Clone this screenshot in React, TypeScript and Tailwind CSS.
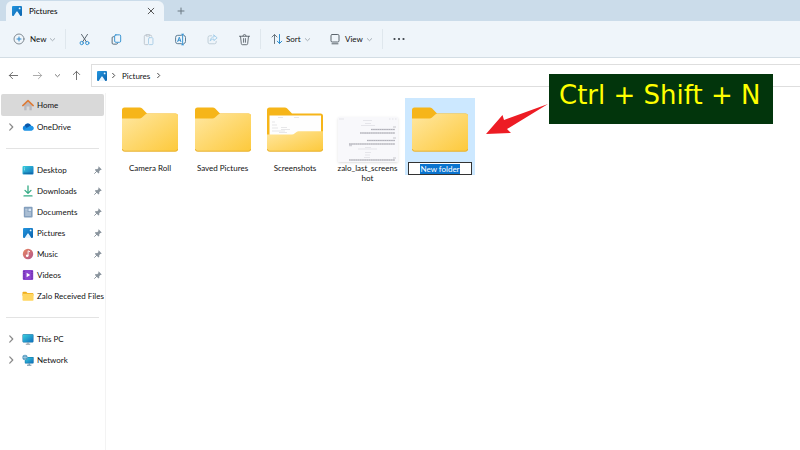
import { useEffect, useRef, useState } from 'react';
import type { ReactNode } from 'react';
import clsx from 'clsx';

const Chevron = ({ dir = 'down', className }: { dir?: 'down' | 'right'; className?: string }) => (
  <svg viewBox="0 0 8 8" className={clsx('shrink-0', className)} fill="none" stroke="currentColor" strokeLinecap="round" strokeLinejoin="round">
    <path d={dir === 'down' ? 'M1.5 3 4 5.4 6.5 3' : 'M3 1.5 5.4 4 3 6.5'} />
  </svg>
);

const PicturesIcon = ({ className = 'size-3' }: { className?: string }) => (
  <svg viewBox="0 0 12 12" className={clsx('shrink-0', className)}>
    <defs>
      <linearGradient id="pic" x1="0" y1="0" x2="1" y2="1">
        <stop offset="0" stopColor="#2496e0" />
        <stop offset="1" stopColor="#0a63ad" />
      </linearGradient>
    </defs>
    <rect x="1" y="1" width="10" height="10" rx="1" fill="url(#pic)" />
    <path d="M2.6 11 5.4 6.8a.7.7 0 0 1 1.200 0L9.400 11z" fill="#e9f6ff" />
    <circle cx="8.600" cy="3.400" r=".9" fill="#e9f6ff" />
  </svg>
);

const Icon = ({ children }: { children: ReactNode }) => (
  <svg viewBox="0 0 12 12" className="size-3 shrink-0">{children}</svg>
);

const HomeIcon = () => (
  <Icon>
    <path d="M2.2 6v5.2h2.4V7.6h2.8v3.6h2.4V6L6 2.6z" fill="#b9b9bf" />
    <path d="M.8 6.600 6 1.600l5.200 5" fill="none" stroke="#dd7a35" strokeWidth="1.500" strokeLinecap="round" strokeLinejoin="round" />
  </Icon>
);

const OneDriveIcon = () => (
  <Icon>
    <path d="M3 9.6a2.6 2.6 0 0 1-.3-5.1A3.4 3.4 0 0 1 9 4.8a2.5 2.5 0 0 1 .5 4.8z" fill="#1585dc" />
    <path d="M2.7 4.5A3.4 3.4 0 0 1 9 4.8L5 7.2z" fill="#0c57a8" />
    <path d="M1.4 8.9 7 5.6a3 3 0 0 1 4.6.7 2.5 2.5 0 0 1-2.1 3.3H3a2.5 2.5 0 0 1-1.6-.7z" fill="#1f96e8" />
  </Icon>
);

const DesktopIcon = () => (
  <Icon>
    <defs>
      <linearGradient id="desk" x1="0" y1="0" x2="1" y2="1">
        <stop offset="0" stopColor="#3bd0dd" />
        <stop offset="1" stopColor="#0f6fbd" />
      </linearGradient>
    </defs>
    <rect x=".5" y="2" width="11" height="8.5" rx="1" fill="url(#desk)" />
    <path d="M1.5 9.2h9" stroke="#0c5a94" strokeWidth=".8" />
    <path d="M2 4h1M2 5.8h1" stroke="#d9fbff" strokeWidth=".7" />
  </Icon>
);

const DownloadsIcon = () => (
  <Icon>
    <path d="M6 1v7M3 5.4 6 8.4l3-3M2 10.9h8" fill="none" stroke="#35ab85" strokeWidth="1.3" strokeLinecap="round" strokeLinejoin="round" />
  </Icon>
);

const DocumentsIcon = () => (
  <Icon>
    <rect x="1.8" y=".8" width="8.8" height="10.6" rx="1" fill="#849fbd" />
    <path d="M3.2 3.2h2.4M3.2 5h2.4M3.2 7h5.8M3.2 9h5.8" stroke="#e4edf6" strokeWidth=".8" />
    <rect x="6.5" y="2.6" width="2.6" height="2.6" fill="#d7e6f5" />
  </Icon>
);

const MusicIcon = () => (
  <Icon>
    <defs>
      <linearGradient id="mus" x1="0" y1="0" x2="1" y2="1">
        <stop offset="0" stopColor="#e8875f" />
        <stop offset="1" stopColor="#b4568c" />
      </linearGradient>
    </defs>
    <circle cx="6" cy="6" r="5.2" fill="url(#mus)" />
    <circle cx="5.2" cy="7.8" r="1.3" fill="#fff" />
    <path d="M6.1 7.8V2.8l1.9 1" fill="none" stroke="#fff" strokeWidth=".9" />
  </Icon>
);

const VideosIcon = () => (
  <Icon>
    <rect x=".8" y="1" width="10.4" height="10" rx="1" fill="#8c45cf" />
    <path d="M2 2v8.5M10 2v8.5" stroke="#5b2397" strokeWidth="1" strokeDasharray="1.2 1" />
    <path d="M4.6 3.8v4.4L8.2 6z" fill="#fff" />
  </Icon>
);

const SmallFolderIcon = () => (
  <Icon>
    <path d="M.5 2.6c0-.5.4-.9.9-.9h2.8l1.2 1.2h5c.6 0 1 .4 1 .9v2H.5z" fill="#efae1c" />
    <rect x=".5" y="3.8" width="11" height="6.9" rx=".8" fill="#ffd661" />
  </Icon>
);

const ThisPcIcon = () => (
  <Icon>
    <rect x=".5" y="1.2" width="11" height="8.2" rx=".8" fill="#0d6fa5" />
    <rect x="1" y="1.7" width="10" height="7.2" rx=".4" fill="url(#desk)" />
    <path d="M6 9.4v1.6M3.8 11.2h4.4" stroke="#7a8c99" strokeWidth=".9" />
  </Icon>
);

const NetworkIcon = () => (
  <Icon>
    <rect x="2.8" y="3" width="8.8" height="6.4" rx=".6" fill="#0d6fa5" />
    <rect x="3.3" y="3.5" width="7.8" height="5.4" fill="url(#desk)" />
    <path d="M7.2 9.4v1.6M5 11.2h4.4" stroke="#4d7c99" strokeWidth=".9" />
    <circle cx="3" cy="3.4" r="2.6" fill="#5599bd" />
    <path d="M.6 3.4h4.8M3 .9v5" stroke="#cfeafa" strokeWidth=".5" />
  </Icon>
);

const PinIcon = () => (
  <svg viewBox="0 0 8 8" className="size-2 shrink-0">
    <path d="M4.600.3 7.700 3.400l-.7.6-.6-.1-1.200 1.300.1 1.600-.8.7L.9 3.900l.7-.8 1.600.1 1.300-1.200-.2-.8z" fill="#8b959e" />
    <path d="M2.800 5.200.6 7.400" stroke="#8b959e" strokeWidth="1" strokeLinecap="round" />
  </svg>
);

const Folder = ({ preview = false }: { preview?: boolean }) => (
  <svg viewBox="0 0 56 45" className="h-[45px] w-14">
    <defs>
      <linearGradient id="fold" x1="0" y1="0" x2="1" y2="1">
        <stop offset="0" stopColor="#ffe7a0" />
        <stop offset="1" stopColor="#fdc93b" />
      </linearGradient>
    </defs>
    <path d="M0 3a2.5 2.5 0 0 1 2.5-2.5h15.2c1 0 1.800.3 2.500 1l4.800 5H53.500A2.500 2.500 0 0 1 56 9v30H0z" fill="#f6b519" />
    {preview ? (
      <>
        <path d="M2.500 8.500H54V30H2.500z" fill="#fefefe" />
        <path d="M11 10.500h5M27 10.500h5M5 15h3M5 18h5M5 21h6M5 24h13M14 20.500h6M14 22.500h9M12 25.500h8" stroke="#dcdde0" strokeWidth=".7" />
        <path d="M0 27.500h25c1 0 1.800-.3 2.500-1l2-1.600c.6-.5 1.300-.7 2-.7H56V42a2.500 2.500 0 0 1-2.500 2.500h-51A2.500 2.500 0 0 1 0 42z" fill="url(#fold)" />
      </>
    ) : (
      <path d="M0 11.500h17.500c1 0 1.800-.3 2.500-1l3-2.800c.6-.6 1.300-.9 2.200-.9H53.500A2.500 2.500 0 0 1 56 9.300V42a2.500 2.500 0 0 1-2.500 2.500h-51A2.500 2.500 0 0 1 0 42z" fill="url(#fold)" />
    )}
    <path d="M.4 42a2.300 2.300 0 0 0 2.300 2.200h50.600A2.300 2.300 0 0 0 55.600 42" fill="none" stroke="#e2a92a" strokeWidth=".8" />
  </svg>
);

const Screenshot = () => (
  <svg viewBox="0 0 60 45" className="h-[45px] w-[60px] shadow">
    <rect width="60" height="45" fill="#f8f8fb" />
    <path d="M1 2h5M51 2h1.500M54 2h1.500M57 2h1.500M25 3.500h9M27 6.500h6M23 8.500h14M26 16.500h6M27 30.500h6M20 32h19M27 35.500h6M27 38h5M26 40.500h6" stroke="#dcdce2" strokeWidth=".7" />
    <path d="M33 12.500h24M22 16h35M29 23.500h28M11 27h46M11 28.500h3M11 43h46" stroke="#d0d0d6" strokeWidth="1.600" />
    <path d="M33 12.500h24M22 16h35M29 23.500h28M11 27h46M11 43h46" stroke="#9b9ba4" strokeWidth=".6" strokeDasharray="1.500 .7" />
    <path d="M55 10h3M55 21h3M55 41h3" stroke="#b9b9c0" strokeWidth=".8" />
  </svg>
);

type NavItem = { label: string; icon: ReactNode; expandable?: boolean; pinned?: boolean };

const topItems: NavItem[] = [{ label: 'OneDrive', icon: <OneDriveIcon />, expandable: true }];

const quickAccess: NavItem[] = [
  { label: 'Desktop', icon: <DesktopIcon />, pinned: true },
  { label: 'Downloads', icon: <DownloadsIcon />, pinned: true },
  { label: 'Documents', icon: <DocumentsIcon />, pinned: true },
  { label: 'Pictures', icon: <PicturesIcon />, pinned: true },
  { label: 'Music', icon: <MusicIcon />, pinned: true },
  { label: 'Videos', icon: <VideosIcon />, pinned: true },
  { label: 'Zalo Received Files', icon: <SmallFolderIcon /> },
];

const devices: NavItem[] = [
  { label: 'This PC', icon: <ThisPcIcon />, expandable: true },
  { label: 'Network', icon: <NetworkIcon />, expandable: true },
];

const NavRow = ({ item, active = false }: { item: NavItem; active?: boolean }) => (
  <button
    type="button"
    className={clsx('flex w-full items-center pl-[5px] pr-px', active ? 'h-[22px] rounded-xs bg-[#d9d9d9]' : 'h-[21px]')}
  >
    <span className="flex w-4 shrink-0 items-center text-[#8a8a8a]">
      {item.expandable && <Chevron dir="right" className="size-[10px]" />}
    </span>
    {item.icon}
    <span className="ml-[3px] whitespace-nowrap">{item.label}</span>
    {item.pinned && <span className="ml-auto mr-px"><PinIcon /></span>}
  </button>
);

const Separator = () => (
  <div className="flex h-[22px] items-center px-[5px]">
    <hr className="w-full border-[#e3e3e3]" />
  </div>
);

const ToolButton = ({ label, children }: { label: string; children: ReactNode }) => (
  <button type="button" aria-label={label} className="flex h-full w-8 items-center justify-center">
    <svg viewBox="0 0 14 14" className="size-[13px]" fill="none" strokeWidth="1" strokeLinecap="round" strokeLinejoin="round">
      {children}
    </svg>
  </button>
);

const Divider = () => <div className="h-5 w-px bg-[#dfe7ed]" />;

const Toolbar = () => (
  <div className="flex h-[37px] items-center border-b border-[#d3dde4] bg-[#eff5fa] pl-[13px]">
    <button type="button" className="flex w-[52px] items-center">
      <svg viewBox="0 0 12 12" className="mr-[5px] size-3" fill="none" strokeLinecap="round">
        <circle cx="6" cy="6" r="5" stroke="#66717a" strokeWidth=".8" />
        <path d="M6 4v4M4 6h4" stroke="#2c86c9" />
      </svg>
      New
      <Chevron className="ml-[3px] size-[7px] text-[#9aa4ac]" />
    </button>
    <Divider />
    <div className="ml-[2px] flex h-full">
      <ToolButton label="Cut">
        <path d="M3.800 1.500 9 9.500M10.200 1.500 5 9.500" stroke="#4f5b65" />
        <circle cx="4" cy="10.800" r="1.800" stroke="#2f8fd0" />
        <circle cx="10" cy="10.800" r="1.800" stroke="#2f8fd0" />
      </ToolButton>
      <ToolButton label="Copy">
        <path d="M4.500 4H3.500a1.200 1.200 0 0 0-1.200 1.200v5.600A1.200 1.200 0 0 0 3.500 12H7a1.200 1.200 0 0 0 1.200-1" stroke="#4f6575" />
        <rect x="5" y="2" width="6.500" height="8" rx="1.300" stroke="#2f8fd0" />
      </ToolButton>
      <ToolButton label="Paste">
        <path d="M4.500 2.500h-1a1 1 0 0 0-1 1v8a1 1 0 0 0 1 1H6M8.500 2.500h1a1 1 0 0 1 1 1M4.800 1.700h3.400v1.600H4.800z" stroke="#bcc5cc" />
        <rect x="7" y="5" width="4.800" height="7.500" rx="1" stroke="#a9cde6" />
      </ToolButton>
      <ToolButton label="Rename">
        <path d="M8 2.500H4A2.300 2.300 0 0 0 1.700 4.800v4.400A2.300 2.300 0 0 0 4 11.500h4M10.500 2.500a2.300 2.300 0 0 1 1.900 2.300v4.400a2.300 2.300 0 0 1-1.900 2.300" stroke="#53748c" />
        <path d="M4 9.300 5.700 4.500l1.700 4.800M4.600 7.800h2.200M9.300 1.500v11M8.300 1.300h2M8.300 12.700h2" stroke="#2f8fd0" />
      </ToolButton>
      <ToolButton label="Share">
        <path d="M6 3H4a1.800 1.800 0 0 0-1.800 1.800v5A1.800 1.800 0 0 0 4 11.600h5.200A1.800 1.800 0 0 0 11 9.800V9" stroke="#bccbd6" />
        <path d="M8.500 2.200 12 5.200 8.500 8.200V6.500C6.500 6.500 5.500 7.200 4.500 8.700c.2-2.600 1.500-4.400 4-4.700z" stroke="#9fcbe8" />
      </ToolButton>
      <ToolButton label="Delete">
        <path d="M1.500 3.500h11M5.300 3.300a1.700 1.700 0 0 1 3.400 0M2.700 3.700l.9 7.800a1.200 1.200 0 0 0 1.200 1.100h4.400a1.200 1.200 0 0 0 1.200-1.100l.9-7.800M6 6v4M8 6v4" stroke="#5f686f" />
      </ToolButton>
    </div>
    <Divider />
    <button type="button" className="ml-2 flex w-[50px] items-center">
      <svg viewBox="0 0 12 12" className="mx-[2px] size-3" fill="none" strokeLinecap="round" strokeLinejoin="round">
        <path d="M3.500 10.500v-9M1 4l2.500-2.500L6 4" stroke="#6b7780" />
        <path d="M8.500 1.500v9M6.300 8.200l2.200 2.300 2.300-2.300" stroke="#2f8fd0" />
      </svg>
      <span className="ml-px">Sort</span>
      <Chevron className="ml-[3px] size-[7px] text-[#9aa4ac]" />
    </button>
    <button type="button" className="ml-[10px] flex w-[53px] items-center">
      <svg viewBox="0 0 12 12" className="mr-1 size-3" fill="none" stroke="#5a646c" strokeLinecap="round">
        <rect x="2" y="1.500" width="8" height="7.500" rx="1.200" />
        <path d="M3 10.800h6" />
      </svg>
      View
      <Chevron className="ml-[3px] size-[7px] text-[#9aa4ac]" />
    </button>
    <Divider />
    <button type="button" aria-label="See more" className="ml-[10px]">
      <svg viewBox="0 0 12 4" className="h-1 w-3" fill="#3a4046">
        <circle cx="1.500" cy="2" r="1.100" />
        <circle cx="6" cy="2" r="1.100" />
        <circle cx="10.500" cy="2" r="1.100" />
      </svg>
    </button>
  </div>
);

const arrowProps = {
  viewBox: '0 0 12 12',
  className: 'size-[11px]',
  fill: 'none',
  stroke: 'currentColor',
  strokeLinecap: 'round',
  strokeLinejoin: 'round',
} as const;

const AddressBar = () => (
  <div className="flex h-[35px] items-center bg-white pl-2">
    <button type="button" aria-label="Back" className="text-[#666]">
      <svg {...arrowProps}><path d="M10.500 6h-9M5 2.500 1.500 6 5 9.500" /></svg>
    </button>
    <button type="button" aria-label="Forward" className="ml-[13px] text-[#a5a5a5]">
      <svg {...arrowProps}><path d="M1.500 6h9M7 2.500 10.500 6 7 9.500" /></svg>
    </button>
    <button type="button" aria-label="Recent locations" className="ml-[11px] text-[#666]">
      <Chevron className="size-[7px]" />
    </button>
    <button type="button" aria-label="Up" className="ml-[10px] text-[#666]">
      <svg {...arrowProps}><path d="M6 10.500v-9M2.500 5 6 1.500 9.500 5" /></svg>
    </button>
    <nav aria-label="Address" className="ml-[9px] flex h-[23px] flex-1 items-center border border-r-0 border-[#dedede] pl-1">
      <PicturesIcon />
      <Chevron dir="right" className="ml-[2px] size-[7px] text-[#333]" />
      <a href="#pictures" className="ml-[5px]">Pictures</a>
      <Chevron dir="right" className="ml-[5px] size-[7px] text-[#333]" />
    </nav>
  </div>
);

const Tile = ({ label, children }: { label: string; children: ReactNode }) => (
  <li className="w-[70px] pt-[9px]">
    <div className="flex h-14 flex-col items-center">{children}</div>
    <p className="px-1 text-center leading-[10px] wrap-anywhere">{label}</p>
  </li>
);

const App = () => {
  const [name, setName] = useState('New folder');
  const nameRef = useRef<HTMLInputElement>(null);

  useEffect(() => {
    // Start with the new folder's name selected
    nameRef.current?.focus();
    nameRef.current?.select();
  }, []);

  return (
    <div className="relative flex min-h-screen flex-col overflow-hidden bg-white font-[Lato,'Noto_Sans',sans-serif] text-[8px] leading-[10px] text-[#111]">
      <header className="flex h-[21px] items-end bg-[#cbdcea] pl-[6px]">
        <div className="flex h-5 w-[158px] items-center rounded-t-md bg-[#eff5fa] pl-[5px] pr-[9px]">
          <PicturesIcon />
          <span className="ml-[6px] font-medium">Pictures</span>
          <button type="button" aria-label="Close tab" className="ml-auto">
            <svg viewBox="0 0 8 8" className="size-2" stroke="#444" strokeWidth=".9" strokeLinecap="round"><path d="m1.200 1.200 5.600 5.600M6.800 1.200 1.200 6.800" /></svg>
          </button>
        </div>
        <button type="button" aria-label="New tab" className="flex h-5 items-center pl-[13px]">
          <svg viewBox="0 0 8 8" className="size-2" stroke="#6b7882" strokeLinecap="round"><path d="M4 1v6M1 4h6" /></svg>
        </button>
      </header>

      <Toolbar />
      <AddressBar />

      <div className="flex flex-1">
        <aside className="w-[106px] shrink-0 border-r border-[#f3f3f3] pl-px pr-px pt-px">
          <NavRow item={{ label: 'Home', icon: <HomeIcon /> }} active />
          {topItems.map(item => <NavRow key={item.label} item={item} />)}
          <Separator />
          {quickAccess.map(item => <NavRow key={item.label} item={item} />)}
          <Separator />
          {devices.map(item => <NavRow key={item.label} item={item} />)}
        </aside>

        <main className="flex-1 pl-[9px] pt-[5px]">
          <ul className="flex w-[360px] items-start justify-between">
            <Tile label="Camera Roll"><Folder /></Tile>
            <Tile label="Saved Pictures"><Folder /></Tile>
            <Tile label="Screenshots"><Folder preview /></Tile>
            <Tile label="zalo_last_screenshot">
              <div className="pt-[10px]"><Screenshot /></div>
            </Tile>
            <li className="flex w-[70px] flex-col items-center bg-[#cce8ff] pt-[9px]">
              <Folder />
              <input
                ref={nameRef}
                aria-label="Folder name"
                value={name}
                onChange={e => setName(e.target.value)}
                className="mt-[10px] h-[13px] w-16 border border-[#333] bg-white text-center outline-none selection:bg-[#0a74cf] selection:text-white"
              />
            </li>
          </ul>
        </main>
      </div>

      {/* Shortcut callout, laid over the window */}
      <div className="absolute left-[486px] top-[74px] flex">
        <svg viewBox="0 0 63 62" className="h-[62px] w-[63px]">
          <path d="M0 60 16.500 41l1.500 5L62 30 21 55l4 4z" fill="#ed1c24" />
        </svg>
        <p className="h-[50px] w-56 bg-[#02350c] pl-[10px] pt-[5px] font-['DejaVu_Sans',sans-serif] text-[26px] leading-8 whitespace-nowrap text-[#ffff00]">
          Ctrl + Shift + N
        </p>
      </div>
    </div>
  );
};

export default App;
